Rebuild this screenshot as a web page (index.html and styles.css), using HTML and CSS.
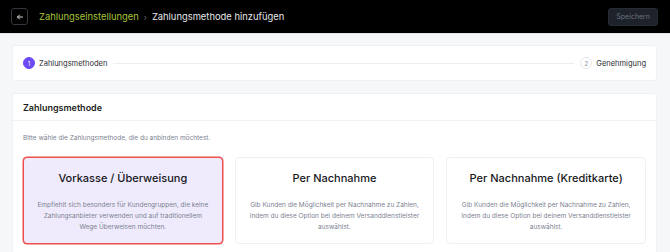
FILE: index.html
```html
<!DOCTYPE html>
<html lang="de">
<head>
    <meta charset="UTF-8">
    <meta name="viewport" content="width=device-width, initial-scale=1.0">
    <title>Zahlungsmethode hinzufügen</title>
    <link rel="stylesheet" href="styles.css">
</head>
<body>
    <header class="topbar">
        <div class="crumbs">
            <button class="back-btn" aria-label="Zurück">
                <svg width="8" height="8" viewBox="0 0 8 8" fill="none" stroke="currentColor" stroke-width="1" stroke-linecap="round" stroke-linejoin="round">
                    <path d="M6.5 4H1.5M3.5 2L1.5 4l2 2"/>
                </svg>
            </button>
            <span class="crumb-link">Zahlungseinstellungen</span>
            <span class="crumb-sep">›</span>
            <span class="crumb-current">Zahlungsmethode hinzufügen</span>
        </div>
        <button class="save-btn" disabled>Speichern</button>
    </header>

    <main class="content">
        <section class="panel stepper">
            <div class="step active">
                <span class="step-num">1</span>
                <span class="step-label">Zahlungsmethoden</span>
            </div>
            <div class="step-line"></div>
            <div class="step">
                <span class="step-num">2</span>
                <span class="step-label">Genehmigung</span>
            </div>
        </section>

        <section class="panel methods">
            <h2 class="panel-title">Zahlungsmethode</h2>
            <div class="panel-body">
                <p class="hint">Bitte wähle die Zahlungsmethode, die du anbinden möchtest.</p>
                <div class="method-grid">
                    <div class="method-card selected">
                        <h3>Vorkasse / Überweisung</h3>
                        <p>Empfiehlt sich besonders für Kundengruppen, die keine Zahlungsanbieter verwenden und auf traditionellem Wege Überweisen möchten.</p>
                    </div>
                    <div class="method-card">
                        <h3>Per Nachnahme</h3>
                        <p>Gib Kunden die Möglichkeit per Nachnahme zu Zahlen, indem du diese Option bei deinem Versanddienstleister auswählst.</p>
                    </div>
                    <div class="method-card">
                        <h3>Per Nachnahme (Kreditkarte)</h3>
                        <p>Gib Kunden die Möglichkeit per Nachnahme zu Zahlen, indem du diese Option bei deinem Versanddienstleister auswählst.</p>
                    </div>
                </div>
            </div>
        </section>
    </main>
</body>
</html>
```

FILE: styles.css
```css
body {
    font-family: Inter, 'Noto Sans', sans-serif;
    margin: 0;
    padding: 0;
    background-color: #f6f7f9;
    color: #1c1d21;
}

.topbar {
    display: flex;
    align-items: center;
    justify-content: space-between;
    height: 33px;
    padding: 0 12px 0 11px;
    background-color: #000;
    border-bottom: 1px solid #e4e6ea;
}

.crumbs {
    display: flex;
    align-items: center;
    font-size: 9.4px;
}

.back-btn {
    display: flex;
    align-items: center;
    justify-content: center;
    width: 17px;
    height: 17px;
    padding: 0;
    margin-right: 11px;
    background: #000;
    color: #d8d9dc;
    border: 1px solid #34373d;
    border-radius: 3px;
}

.crumb-link {
    color: #a9c43a;
}

.crumb-sep {
    color: #6d7078;
    margin: 0 5px;
    font-size: 8px;
}

.crumb-current {
    color: #e6e7ea;
}

.save-btn {
    height: 18px;
    padding: 0 7px;
    background-color: #1d222b;
    color: #6c717c;
    border: 1px solid #262b35;
    border-radius: 3px;
    font-family: inherit;
    font-size: 7px;
}

.content {
    padding: 11px 13px 0 12px;
    display: flex;
    flex-direction: column;
    gap: 12px;
}

.panel {
    background: #fff;
    border-radius: 3px;
    border: 1px solid #f0f1f4;
}

.stepper {
    display: flex;
    align-items: center;
    height: 34px;
    padding: 0 10px;
}

.step {
    display: flex;
    align-items: center;
    gap: 4px;
    font-size: 7.5px;
    color: #2a2b30;
}

.step-num {
    display: flex;
    align-items: center;
    justify-content: center;
    width: 12px;
    height: 12px;
    border-radius: 50%;
    border: 1px solid #e6e8ec;
    color: #8a8e98;
    font-size: 6px;
    box-sizing: border-box;
}

.step.active .step-num {
    background-color: #6b4af6;
    border-color: #6b4af6;
    color: #fff;
}

.step-line {
    flex: 1;
    height: 1px;
    background-color: #eceef1;
    margin: 0 6px;
}

.panel-title {
    margin: 0;
    padding: 8px 10px 7px;
    font-size: 9px;
    font-weight: 600;
    border-bottom: 1px solid #f0f1f4;
}

.panel-body {
    padding: 13px 10px 10px;
}

.hint {
    margin: 0 0 15px;
    font-size: 6.5px;
    color: #7c8190;
}

.method-grid {
    display: grid;
    grid-template-columns: repeat(3, 1fr);
    gap: 12px;
}

.method-card {
    border: 1px solid #eef0f3;
    border-radius: 4px;
    padding: 13px 12px 10px;
    text-align: center;
}

.method-card.selected {
    background-color: #efebfd;
    border-color: #ef4f4c;
    box-shadow: 0 0 0 0.5px #ef4f4c;
}

.method-card h3 {
    margin: 0 0 15px;
    font-size: 11px;
    font-weight: 500;
    color: #16171b;
}

.method-card p {
    margin: 0;
    font-size: 6.5px;
    line-height: 11px;
    color: #7c8190;
}
```
